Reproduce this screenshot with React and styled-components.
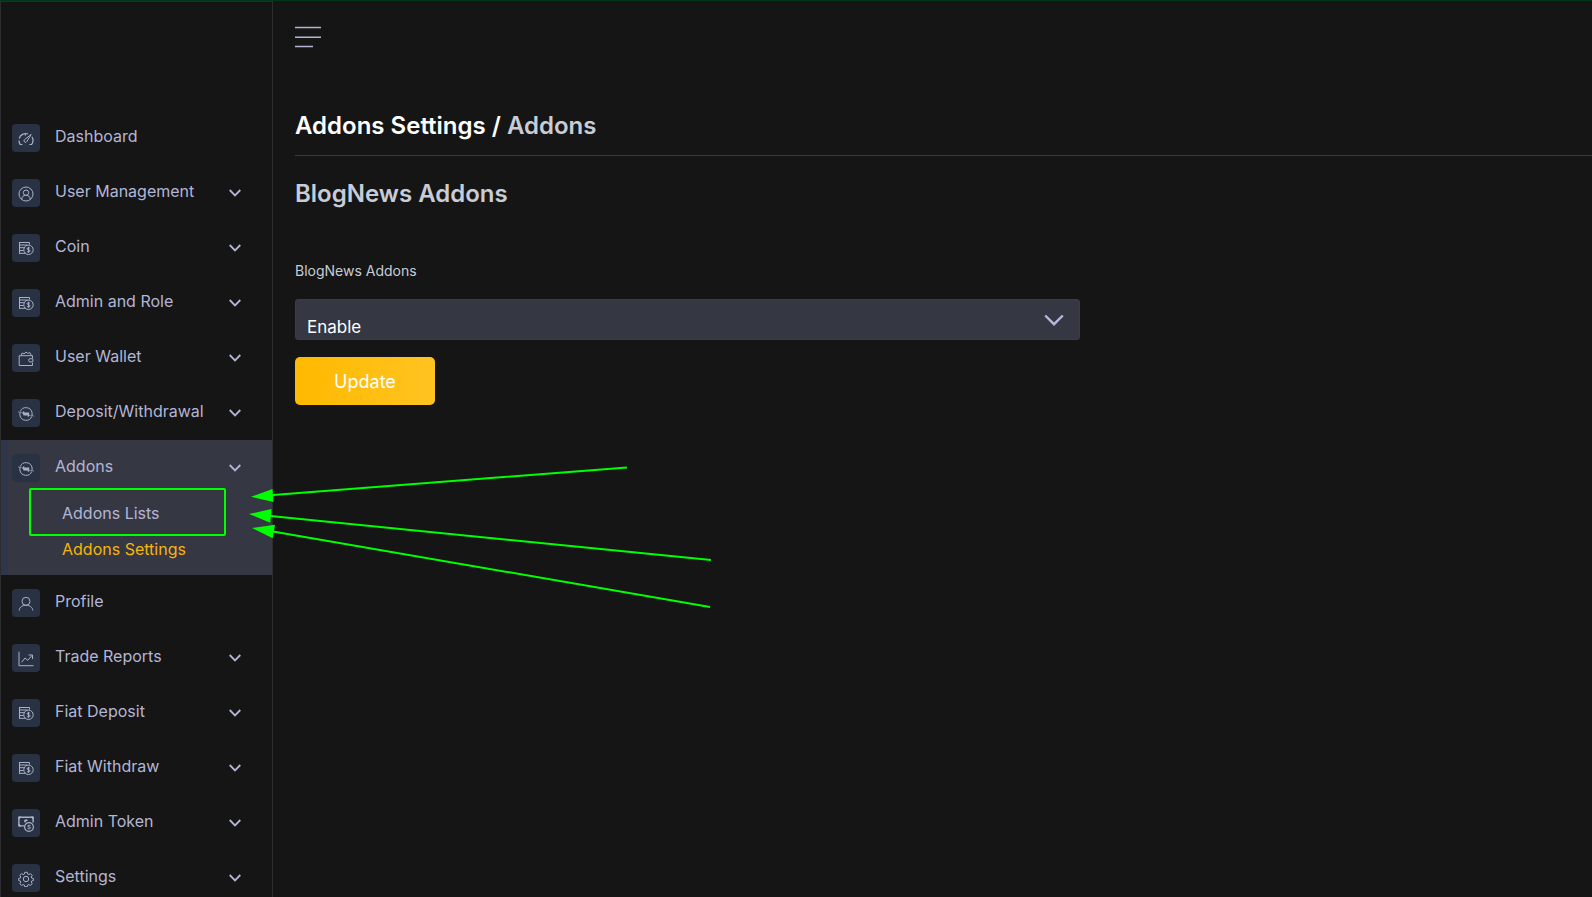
import React from "react";
import styled, { createGlobalStyle } from "styled-components";

const Global = createGlobalStyle`
  * { box-sizing: border-box; }
  body {
    margin: 0;
    background: #151515;
    color: #b3b5d6;
    font-family: Inter, "Open Sans", sans-serif;
    font-size: 16px;
  }
`;

const Page = styled.div`
  position: relative;
  display: flex;
  height: 100vh;
  border-top: 1px solid #00351a;
`;

const Sidebar = styled.aside`
  flex: 0 0 273px;
  padding-top: 108px;
  border: 1px solid #2c2c2e;
  border-bottom: 0;
  overflow-y: auto;
  scrollbar-width: none;
`;

const Menu = styled.ul`
  list-style: none;
  margin: 0;
  padding: 0;
`;

const MenuItem = styled.li`
  background: ${(p) => (p.$active ? "#353842" : "transparent")};
  box-shadow: ${(p) => (p.$active ? "inset 7px 0 #2e364c" : "none")};
  padding-bottom: ${(p) => (p.$active ? "8px" : "0")};
`;

const MenuLink = styled.a`
  display: flex;
  align-items: center;
  height: 55px;
  padding: 0 31px 0 11px;
  color: inherit;
  text-decoration: none;
`;

const IconBox = styled.span`
  display: grid;
  place-items: center;
  width: 28px;
  height: 28px;
  padding-top: 2px;
  margin-right: 15px;
  border-radius: 4px;
  background: #293242;
  svg { display: block; }
`;

const MenuLabel = styled.span`
  flex: 1;
  line-height: 20px;
  padding-bottom: 3px;
`;

const SubMenu = styled.ul`
  list-style: none;
  margin: 0;
  padding: 0 0 0 61px;
`;

const SubLink = styled.a`
  display: block;
  line-height: 36px;
  color: ${(p) => (p.$current ? "#f7b40b" : "inherit")};
  text-decoration: none;
`;

const Main = styled.main`
  flex: 1;
  min-width: 0;
  padding: 23px 0 0 22px;
`;

const ToggleButton = styled.button`
  display: block;
  padding: 0;
  border: 0;
  background: none;
  color: #b3b5d6;
  cursor: pointer;
  svg { display: block; }
`;

const Title = styled.h1`
  margin: 60px 0 0;
  padding-bottom: 13px;
  border-bottom: 1px solid #3a3a3c;
  color: #fff;
  font-size: 24px;
  font-weight: 600;
  line-height: 32px;
  span { color: #c8ccd6; }
`;

const Subtitle = styled.h2`
  margin: 22px 0 0;
  color: #c8ccd6;
  font-size: 24px;
  font-weight: 600;
  line-height: 32px;
`;

const Form = styled.form`
  max-width: 785px;
  margin-top: 51px;
`;

const Label = styled.label`
  display: block;
  color: #c8ccd6;
  font-size: 14px;
  line-height: 20px;
`;

const SelectWrap = styled.div`
  position: relative;
  margin-top: 18px;
  svg {
    position: absolute;
    right: 16px;
    top: 15px;
    pointer-events: none;
  }
`;

const Select = styled.select`
  display: block;
  appearance: none;
  width: 100%;
  height: 41px;
  padding: 14px 48px 0 11px;
  border: 1px solid #3a3d45;
  border-radius: 3px;
  background: #353842;
  color: #fff;
  font-family: inherit;
  font-size: 17px;
`;

const UpdateButton = styled.button`
  display: block;
  width: 140px;
  height: 48px;
  margin-top: 17px;
  border: 0;
  border-radius: 5px;
  background: linear-gradient(90deg, #ffb900, #ffc321);
  color: #fff;
  font-family: inherit;
  font-size: 18px;
  cursor: pointer;
`;

const Annotations = styled.svg`
  position: absolute;
  left: 0;
  top: -1px;
  pointer-events: none;
`;

const drawings = {
  gauge: (
    <>
      <path d="M4.4 13.5H2.2A7 7 0 0 1 1 9.5M1.2 7.5A7 7 0 0 1 9.8 2.8M13.9 5.8a7 7 0 0 1-.3 7.7h-2.2M7.3 2.5v2" strokeWidth="1.2" />
      <path d="M13.2 3.4 8.9 10.4a1.5 1.5 0 1 1-2.4-1.7z" />
    </>
  ),
  userCircle: (
    <>
      <circle cx="8" cy="8" r="7" />
      <circle cx="8" cy="6.7" r="2.7" />
      <path d="M3.8 13.3c0-2.6 1.6-4 4.2-4s4.2 1.4 4.2 4" />
    </>
  ),
  coins: (
    <>
      <path d="M1.5 1v11.5M1 1.5h10.5v2M1.5 4h8M1.5 6.7h4.5M1.5 9.5h4M1 12.3h6.5" />
      <circle cx="10.5" cy="8.8" r="4.7" />
      <path d="M12.1 7.3c-.5-.7-3-.9-3 .4 0 1.4 3 .7 3 2.2 0 1.3-2.6 1.3-3.2.3M10.5 5.8v6" />
    </>
  ),
  wallet: (
    <>
      <path d="M14.5 7V4.7H1.2v9.8h13.3V12M14.8 7.7h-2.6a1.6 1.6 0 0 0 0 3.2h2.6z" />
      <path d="M3 4.5 4.2 2l2 1 1.6-2 2 1.4 2-.8 1.5 2.8" />
    </>
  ),
  exchange: (
    <>
      <path d="M2.2 5.6a6.2 6.2 0 0 1 11.9 1.3v1.6M13.8 10.4A6.2 6.2 0 0 1 1.9 9.1V7.5M.3 5.8l1.7 1.4 1.6-1M15.7 10.2 14 8.8l-1.6 1" />
      <path d="M6.2 4.8v1.6h5v3.2l1-.8v.4l-2.4 2V9.6H5.4V8.8L4 7z" fill="#a9b0cb" stroke="none" />
    </>
  ),
  user: (
    <>
      <circle cx="8" cy="5.3" r="4" />
      <path d="M1.2 14.6c.2-3.5 3-5.3 6.8-5.3s6.6 1.8 6.8 5.3" />
    </>
  ),
  chart: <path d="M1 .7v14h14.5M3.7 11.2l3.3-4.2 2.7 2.3 4.6-5.1M10.5 4h4v4" />,
  banknote: (
    <>
      <path d="M6 9.9H.9V1.2h14.2v5.2" strokeWidth="1.4" />
      <path d="M1 1h2L1 3zM15 1h-2l2 2zM1 10V8l2 2z" fill="#a9b0cb" />
      <path d="M6.4 6.2a1.9 1.9 0 1 1 3.4-1.6l-1.6.7-.6 1.3z" fill="#a9b0cb" stroke="none" />
      <circle cx="11" cy="11" r="4.4" strokeWidth="1.2" />
      <path d="M12.5 9.8c-.5-.8-2.8-.8-2.8.3 0 1.2 2.8.5 2.8 1.8 0 1.2-2.4 1.1-3 .3" />
    </>
  ),
  gear: (
    <>
      <circle cx="8" cy="8" r="2.7" />
      <path d="M6.7 1.3h2.6l.4 1.8 1.1.5 1.6-1 1.8 1.8-1 1.6.5 1.1 1.7.4v2.1l-1.7.4-.5 1.1 1 1.6-1.8 1.8-1.6-1-1.1.5-.4 1.7H6.7l-.4-1.7-1.1-.5-1.6 1-1.8-1.8 1-1.6-.5-1.1-1.6-.4V7.5l1.6-.4.5-1.1-1-1.6 1.8-1.8 1.6 1 1.1-.5z" />
    </>
  ),
};

const Icon = ({ name }) => (
  <svg width="16" height="16" viewBox="0 0 16 16" fill="none" stroke="#a9b0cb" strokeWidth="1" aria-hidden="true">
    {drawings[name]}
  </svg>
);

const Chevron = () => (
  <svg width="12" height="8" viewBox="0 0 12 8" fill="none" stroke="#b3b5d6" strokeWidth="1.8" aria-hidden="true">
    <path d="M.7 1 6 6.4 11.3 1" />
  </svg>
);

const items = [
  { label: "Dashboard", icon: "gauge", leaf: true },
  { label: "User Management", icon: "userCircle" },
  { label: "Coin", icon: "coins" },
  { label: "Admin and Role", icon: "coins" },
  { label: "User Wallet", icon: "wallet" },
  { label: "Deposit/Withdrawal", icon: "exchange" },
  { label: "Addons", icon: "exchange", children: ["Addons Lists", "Addons Settings"] },
  { label: "Profile", icon: "user", leaf: true },
  { label: "Trade Reports", icon: "chart" },
  { label: "Fiat Deposit", icon: "coins" },
  { label: "Fiat Withdraw", icon: "coins" },
  { label: "Admin Token", icon: "banknote" },
  { label: "Settings", icon: "gear" },
];

export default function App() {
  return (
    <Page>
      <Global />
      <Sidebar>
        <nav>
          <Menu>
            {items.map((item) => (
              <MenuItem key={item.label} $active={!!item.children}>
                <MenuLink href="#">
                  <IconBox><Icon name={item.icon} /></IconBox>
                  <MenuLabel>{item.label}</MenuLabel>
                  {!item.leaf && <Chevron />}
                </MenuLink>
                {item.children && (
                  <SubMenu>
                    {item.children.map((child, i) => (
                      <li key={child}><SubLink href="#" $current={i === 1}>{child}</SubLink></li>
                    ))}
                  </SubMenu>
                )}
              </MenuItem>
            ))}
          </Menu>
        </nav>
      </Sidebar>
      <Main>
        <ToggleButton type="button" aria-label="Toggle menu">
          <svg width="27" height="26" viewBox="0 0 27 26" stroke="currentColor" strokeWidth="1.6">
            <path d="M0 3.5h26M0 13.2h26M0 22.5h18" />
          </svg>
        </ToggleButton>
        <Title>Addons Settings / <span>Addons</span></Title>
        <Subtitle>BlogNews Addons</Subtitle>
        <Form onSubmit={(e) => e.preventDefault()}>
          <Label htmlFor="blognews">BlogNews Addons</Label>
          <SelectWrap>
            <Select id="blognews" defaultValue="Enable">
              <option>Enable</option>
              <option>Disable</option>
            </Select>
            <svg width="20" height="13" viewBox="0 0 20 13" fill="none" stroke="#b3b9dc" strokeWidth="2.4">
              <path d="M1.2 1.5 10 10.2 18.8 1.5" />
            </svg>
          </SelectWrap>
          <UpdateButton type="submit">Update</UpdateButton>
        </Form>
      </Main>
      <Annotations width="720" height="620" viewBox="0 0 720 620" aria-hidden="true">
        <rect x="30" y="489" width="195" height="46" rx="1" fill="none" stroke="#0f0" strokeWidth="2" />
        <path d="M627 467.5 270 495.2M711 560 268 515.8M710 607 270 531" stroke="#0f0" strokeWidth="2" />
        <path d="M251 496.8 272.5 489l1 13zM249 514l22.5-5-1.3 13.7zM252 528l23-3.2-2.3 13.4z" fill="#0f0" />
      </Annotations>
    </Page>
  );
}
